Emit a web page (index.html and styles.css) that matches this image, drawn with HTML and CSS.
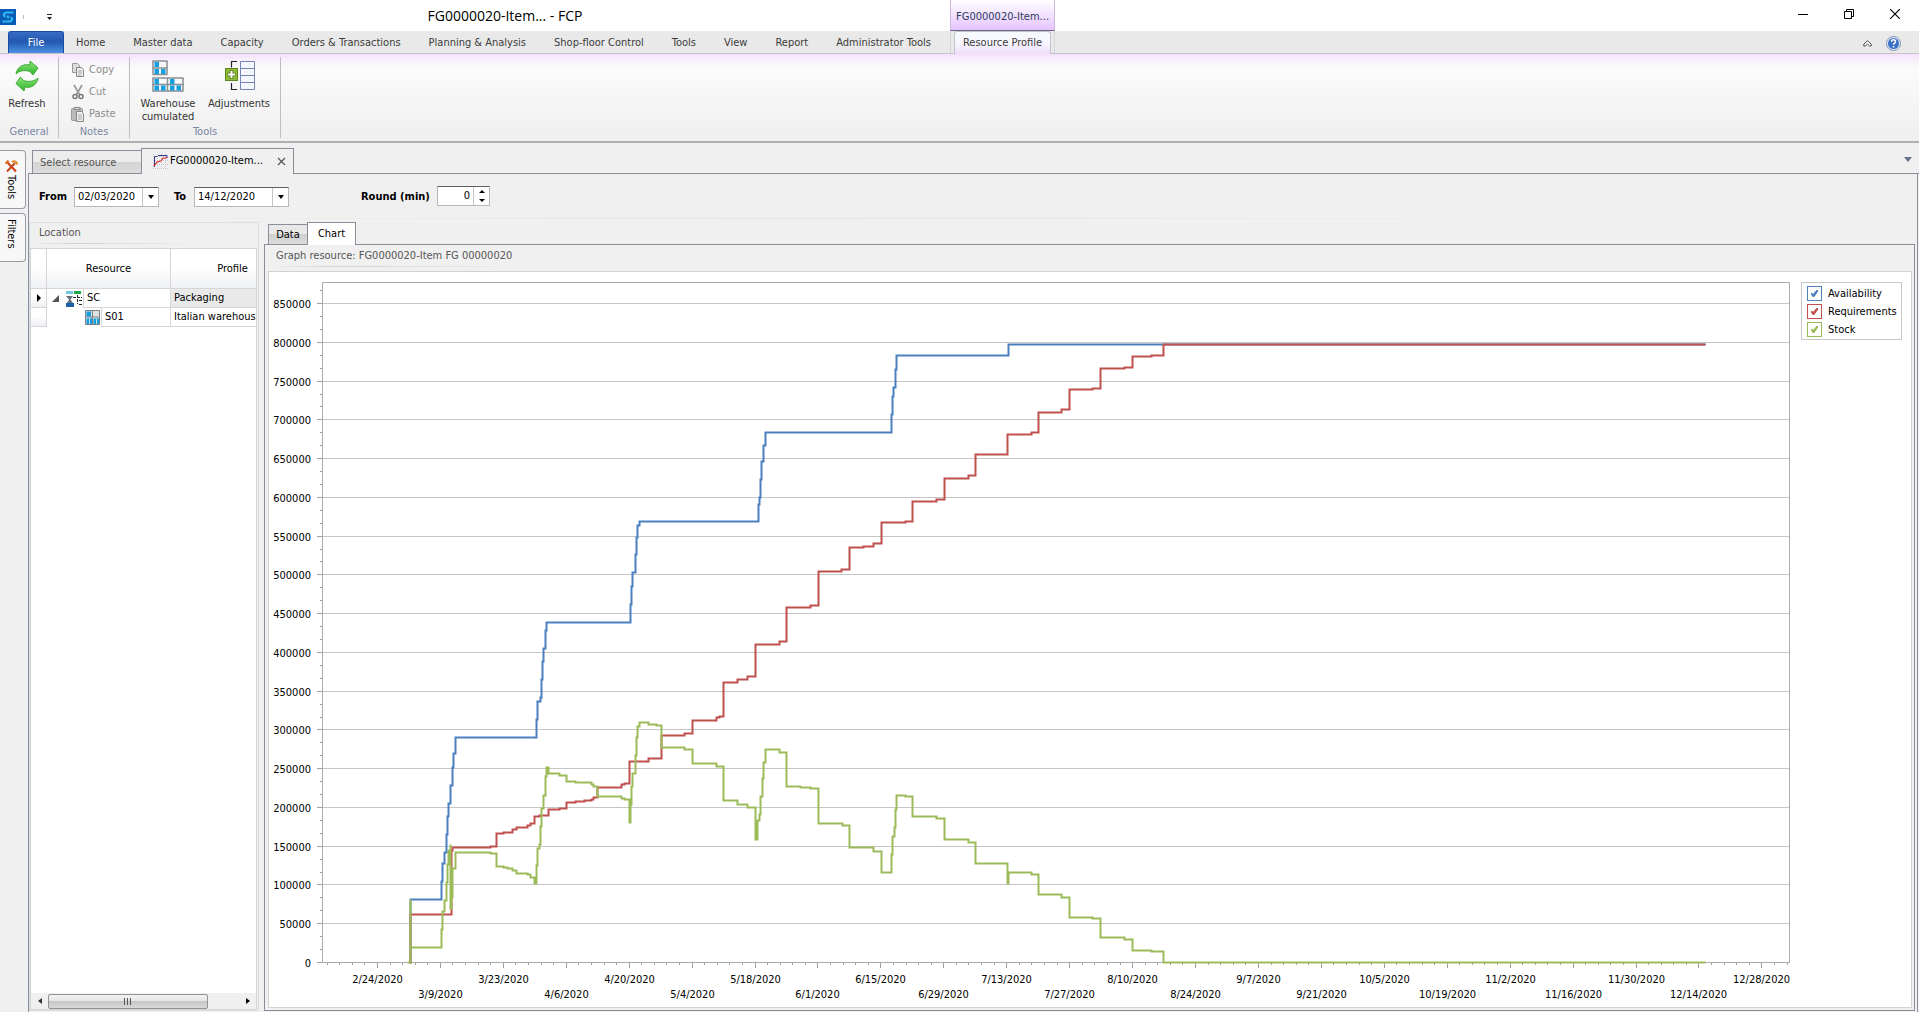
FILE: index.html
```html
<!DOCTYPE html>
<html lang="en">
<head>
<meta charset="utf-8">
<title>FG0000020-Item... - FCP</title>
<link rel="stylesheet" href="styles.css">
</head>
<body>
<header class="ribbon-head">
  <div class="titlebar">
    <div class="quick">
      <svg class="logo" width="16" height="16" viewBox="0 0 16 16" aria-hidden="true"><rect width="16" height="16" fill="#0a5bb5"/><path d="M13.500 3.500H7C3.500 3.500 3 7.500 5.500 7.500M2.500 12.500H9C12.500 12.500 13 8.500 10.500 8.500" fill="none" stroke="#31b8f2" stroke-width="2.200"/><circle cx="8" cy="8" r="1.400" fill="#31b8f2"/></svg>
      <span class="quick-sep"></span>
      <button class="quick-menu" aria-label="Customize quick access toolbar"><svg width="5" height="6" viewBox="0 0 5 6"><path d="M0 0h5v1H0zM0 3h5L2.500 6z" fill="#222"/></svg></button>
    </div>
    <h1 class="title">FG0000020-Item... - FCP</h1>
  </div>
  <div class="context-title">FG0000020-Item...</div>
  <div class="window-buttons">
    <button aria-label="Minimize"><svg width="10" height="10" viewBox="0 0 10 10"><path d="M0 5.500h10" stroke="#000"/></svg></button>
    <button aria-label="Restore"><svg width="10" height="10" viewBox="0 0 10 10"><path d="M.5 2.500h7v7h-7zM2.500 2.500v-2h7v7h-2" fill="none" stroke="#000"/></svg></button>
    <button aria-label="Close"><svg width="10" height="10" viewBox="0 0 10 10"><path d="M0 0l10 10M10 0L0 10" stroke="#000" stroke-width="1.200"/></svg></button>
  </div>
  <nav class="tabs">
    <button class="tab tab-file">File</button>
    <button class="tab">Home</button>
    <button class="tab">Master data</button>
    <button class="tab">Capacity</button>
    <button class="tab">Orders &amp; Transactions</button>
    <button class="tab">Planning &amp; Analysis</button>
    <button class="tab">Shop-floor Control</button>
    <button class="tab">Tools</button>
    <button class="tab">View</button>
    <button class="tab">Report</button>
    <button class="tab">Administrator Tools</button>
  </nav>
  <div class="context-tabs"><button class="tab tab-active">Resource Profile</button></div>
  <div class="ribbon-tools">
    <button aria-label="Collapse ribbon"><svg width="9" height="7" viewBox="0 0 9 7"><path d="M4.500 .7L.8 4.200v1.800h1.500L4.500 4l2.200 2h1.500V4.200z" fill="#fff" stroke="#444"/></svg></button>
    <button aria-label="Help"><svg width="15" height="15" viewBox="0 0 15 15"><circle cx="7.500" cy="7.500" r="7" fill="#e4ecf8" stroke="#7f93b5"/><circle cx="7.500" cy="7.500" r="5.500" fill="#3a70c4"/><path d="M5.500 5.800c0-2.600 4-2.600 4 0 0 1.500-2 1.300-2 3M7.500 10v1.600" fill="none" stroke="#fff" stroke-width="1.500"/></svg></button>
  </div>
</header>

<section class="ribbon" aria-label="Resource Profile">
  <div class="group group-general">
    <div class="group-body">
      <button class="big"><svg width="32" height="32" viewBox="0 0 32 32"><defs><linearGradient id="gr" x1="0" y1="0" x2="0" y2="1"><stop offset="0" stop-color="#8ee67a"/><stop offset="1" stop-color="#2fb32c"/></linearGradient></defs><path d="M5 14C6 7 12 3.500 19 5V1l8 7-5 7-3-3.500C13 9.500 8 11 5 14z" fill="url(#gr)" stroke="#3cab37"/><path d="M27 18c-1 7-7 10.500-13 9l-1 4-8-7.500L9.500 17l3 3.500C18 22.500 24 21 27 18z" fill="url(#gr)" stroke="#3cab37"/></svg><span>Refresh</span></button>
    </div>
    <div class="group-name">General</div>
  </div>
  <div class="group group-notes">
    <div class="group-body list">
      <button class="small" disabled><svg width="16" height="16" viewBox="0 0 16 16"><path d="M2.500 1.500h5l2 2v7h-7z" fill="#ddd" stroke="#999"/><path d="M6.500 5.500h5l2 2v7h-7z" fill="#ececec" stroke="#888"/><path d="M8 9h4M8 11h4M8 13h3" stroke="#aaa"/></svg>Copy</button>
      <button class="small" disabled><svg width="16" height="16" viewBox="0 0 16 16"><path d="M4 1l5.500 9.500M12 1L6.500 10.500" stroke="#999" stroke-width="1.700"/><circle cx="5" cy="12.500" r="2" fill="none" stroke="#777" stroke-width="1.500"/><circle cx="11" cy="12.500" r="2" fill="none" stroke="#777" stroke-width="1.500"/></svg>Cut</button>
      <button class="small" disabled><svg width="16" height="16" viewBox="0 0 16 16"><rect x="1.500" y="2.500" width="11" height="12" rx="1" fill="#bbb" stroke="#999"/><path d="M4 3.500V1.500h6v2z" fill="#ddd" stroke="#888"/><path d="M6.500 5.500h5l2 2v8h-7z" fill="#eee" stroke="#888"/><path d="M8 9h4M8 11h4M8 13h4" stroke="#aaa"/></svg>Paste</button>
    </div>
    <div class="group-name">Notes</div>
  </div>
  <div class="group group-tools">
    <div class="group-body">
      <button class="big wide"><svg width="32" height="32" viewBox="0 0 32 32"><path d="M.5 1h15M.5 8h15M.5 14.500h15M.5 18h31M.5 24.500h31M.5 31h31" stroke="#8a8f92" stroke-width="1.500"/><path d="M1 1v13M15 1v13M1 18v13M15.500 18v13M31 18v13" stroke="#8a8f92" stroke-width="1.500"/><path d="M2.500 2h4.500v5H2.500zM2.500 9h4.500v5H2.500zM9 9h4.500v5H9zM2.500 19h4.500v5H2.500zM18 19h4.500v5H18zM2.500 25.500h4.500v5H2.500zM9 25.500h4.500v5H9zM18 25.500h4.500v5H18zM24.500 25.500h4.500v5h-4.500z" fill="#14a0e0"/></svg><span>Warehouse<br>cumulated</span></button>
      <button class="big wide"><svg width="32" height="32" viewBox="0 0 32 32"><path d="M14 1.500H8.500v6M8.500 23v6.500H14" fill="none" stroke="#223" stroke-width="1.200"/><path d="M17.500 1.500h14v28h-14z" fill="#f6f7fc" stroke="#7684b8"/><path d="M17.500 8.500h14M17.500 15.500h14M17.500 22.500h14" stroke="#7684b8"/><rect x="2.500" y="8.500" width="12" height="12" fill="#8dbb36" stroke="#5b8620"/><path d="M8.500 10.500v8M4.500 14.500h8" stroke="#4a6a20" stroke-width="3.600"/><path d="M8.500 11v7M5 14.500h7" stroke="#fff" stroke-width="2"/></svg><span>Adjustments</span></button>
    </div>
    <div class="group-name">Tools</div>
  </div>
</section>

<main class="workspace">
  <aside class="side-tabs">
    <button class="side-tab"><svg width="13" height="13" viewBox="0 0 13 13"><path d="M2 2l9 9.500" stroke="#d0401c" stroke-width="2.200"/><path d="M10 3L2 11.500" stroke="#c8451a" stroke-width="2"/><path d="M7 2c2-2 5 0 5.500 2.500" fill="none" stroke="#e08c28" stroke-width="2"/><path d="M.5 3.500l3-3" stroke="#e0742c" stroke-width="2"/></svg>Tools</button>
    <button class="side-tab">Filters</button>
  </aside>
  <div class="document">
    <div class="doc-tabs">
      <button class="doc-tab doc-first">Select resource</button>
      <button class="doc-tab doc-active"><svg width="15" height="15" viewBox="0 0 15 15"><path d="M.5 0v15M4.500 0v15M8.500 0v15M12.500 0v15M0 2.500h15M0 6.500h15M0 10.500h15M0 14.500h15" stroke="#c4c4cc" stroke-dasharray="1 1"/><path d="M1.500 13V2.500h3M5 1.500h9V4" fill="none" stroke="#3a3a90"/><path d="M1 12l3-4 4-1 2-3 4 0" fill="none" stroke="#dc2020" stroke-width="1.200"/></svg><span>FG0000020-Item...</span><svg class="close" width="9" height="9" viewBox="0 0 9 9"><path d="M1 1l7 7M8 1L1 8" stroke="#555" stroke-width="1.200"/></svg></button>
      <button class="doc-menu" aria-label="Open documents"></button>
    </div>
    <div class="doc-body">
      <form class="filters">
        <label class="from" for="from">From</label>
        <span class="combo"><input id="from" value="02/03/2020"><button type="button" aria-label="Pick start date"><i class="down"></i></button></span>
        <label class="to" for="to">To</label>
        <span class="combo combo-to"><input id="to" value="14/12/2020"><button type="button" aria-label="Pick end date"><i class="down"></i></button></span>
        <label class="round" for="round">Round (min)</label>
        <span class="combo spin"><input id="round" value="0"><button type="button" aria-label="Change rounding"><i class="up"></i><i class="down"></i></button></span>
      </form>
      <div class="panes">
        <section class="location">
          <h2 class="caption">Location</h2>
          <div class="tree">
            <table>
              <thead><tr><th class="mark"></th><th class="res">Resource</th><th class="prof">Profile</th></tr></thead>
              <tbody>
                <tr>
                  <td class="mark"><i class="right"></i></td>
                  <td class="res"><span class="node"><i class="expand"></i><svg width="16" height="16" viewBox="0 0 16 16"><path d="M0 1.500h7" stroke="#6fc6dc" stroke-width="3"/><path d="M8 1.500h7" stroke="#1da84a" stroke-width="3"/><path d="M0 5h7l-2.500 3.500L7 12H1l2-3.500z" fill="#67727c"/><path d="M0 14h8" stroke="#1b62a8" stroke-width="4"/><path d="M7 6.500h9M11.500 4v9M13 9.500h3M13 13.500h3" stroke="#222" stroke-dasharray="3 1"/></svg><span class="cell">SC</span></span></td>
                  <td class="prof sel">Packaging</td>
                </tr>
                <tr>
                  <td class="mark"></td>
                  <td class="res"><span class="node child"><svg width="15" height="15" viewBox="0 0 15 15"><rect width="15" height="15" fill="#dfe3e6"/><path d="M.5 .5h14v14H.5zM0 7h15M7.500 0v15" fill="none" stroke="#7b8186"/><path d="M1.500 1.500h4.500v5H1.500zM1.500 8.500h5.500V14H1.500zM8.500 8.500h5.500V14H8.500z" fill="#149cdf"/><path d="M4.500 9v5M11.500 9v5" stroke="#bfe2f3"/></svg><span class="cell">S01</span></span></td>
                  <td class="prof">Italian warehouse</td>
                </tr>
              </tbody>
            </table>
            <div class="hscroll">
              <button aria-label="Scroll left"><i class="left"></i></button>
              <div class="track"><div class="thumb"></div></div>
              <button aria-label="Scroll right"><i class="right"></i></button>
            </div>
          </div>
        </section>
        <section class="graph">
          <div class="view-tabs">
            <button class="view-tab">Data</button>
            <button class="view-tab view-active">Chart</button>
          </div>
          <div class="graph-body">
            <h2 class="caption">Graph resource: FG0000020-Item FG 00000020</h2>
            <div class="chart">
              <div class="plot"><svg id="plot" role="img" aria-label="Availability, requirements and stock over time"></svg></div>
              <div class="legend">
                <label class="blue"><input type="checkbox" checked>Availability</label>
                <label class="red"><input type="checkbox" checked>Requirements</label>
                <label class="green"><input type="checkbox" checked>Stock</label>
              </div>
            </div>
          </div>
        </section>
      </div>
    </div>
  </div>
</main>
<script src="chart.js"></script>
</body>
</html>
```
FILE: styles.css
```css
* { box-sizing: border-box; }
body {
  margin: 0;
  min-height: 100vh;
  display: flex;
  flex-direction: column;
  background: #f0f0f0;
  color: #000;
  font: 11px/14px "DejaVu Sans Condensed", Roboto, sans-serif;
}
button, input { font: inherit; color: inherit; }
button { margin: 0; padding: 0; border: 0; background: none; }
h1, h2 { margin: 0; font-weight: normal; }
svg { display: block; flex: none; }

/* Title bar and ribbon tabs */
.ribbon-head {
  display: grid;
  grid-template-columns: auto auto 1fr;
  grid-template-rows: 31px 22px;
  background: linear-gradient(#fff 31px, #e9e9e9 31px);
  border-bottom: 1px solid #c6c2cc;
  height: 54px;
}
.titlebar { display: flex; align-items: center; }
.quick { display: flex; align-items: center; width: 60px; padding-top: 3px; }
.quick-sep { width: 1px; height: 4px; margin-left: 7px; background: #bbb; }
.quick-menu { margin-left: 23px; }
.title { flex: 1; text-align: center; font: 14px/18px "Open Sans", sans-serif; padding-top: 1px; }
.context-title {
  padding-top: 10px;
  text-align: center;
  color: #2c3a5c;
  border: solid #cdb8dc;
  border-width: 0 1px 1px;
  border-bottom-color: #6a6480;
  background: linear-gradient(#fff, #e6c4ff);
}
.window-buttons { display: flex; justify-content: flex-end; gap: 36px; padding: 9px 19px 0 0; align-items: flex-start; }
.tabs { display: flex; padding: 0 5px 0 8px; }
.tab { padding: 1px 14px 0; color: #3b3b3b; white-space: nowrap; }
.tab-file {
  width: 56px;
  margin-right: -2px;
  color: #fff;
  border: 1px solid #1c4aa0;
  border-bottom: 0;
  border-radius: 3px 3px 0 0;
  background: linear-gradient(#3a6cc4, #2358b0 45%, #4a90e0);
}
.context-tabs { display: flex; padding: 0 3px; border: solid #d4d4d4; border-width: 0 1px; }
.tab-active {
  padding: 0 8px;
  margin-bottom: -1px;
  border: 1px solid #c2c2ca;
  border-bottom: 0;
  border-radius: 3px 3px 0 0;
  background: linear-gradient(#f6faff, #f8f6ff 50%, #f0dcfc);
}
.ribbon-tools { display: flex; justify-content: flex-end; align-items: center; gap: 14px; padding: 2px 18px 0 0; }

/* Ribbon */
.ribbon {
  display: flex;
  height: 89px;
  padding-top: 3px;
  background: linear-gradient(#f4e0fb, #f8f0fc 6px, #fbfbfb 15px, #f0f0f0 80px);
  border-bottom: 2px solid #b0b0b0;
}
.group { display: flex; flex-direction: column; margin-bottom: 3px; border-right: 1px solid #bdbdc2; }
.group-general { width: 59px; }
.group-notes { width: 71px; }
.group-tools { width: 151px; }
.group-body { display: flex; flex: 1; padding-top: 3px; }
.group-name { color: #7a86a4; text-align: center; line-height: 12px; }
.big { display: flex; flex-direction: column; align-items: center; width: 54px; color: #333; line-height: 13px; gap: 5px; }
.wide { width: 76px; }
.wide + .wide { width: 66px; }
.list { flex-direction: column; gap: 6px; padding: 5px 0 0 11px; }
.small { display: flex; align-items: center; gap: 3px; height: 16px; color: #8c8c8c; }

/* Document area */
.workspace { flex: 1; display: flex; min-height: 0; }
.side-tabs { flex: none; width: 28px; padding-top: 7px; display: flex; flex-direction: column; gap: 4px; }
.side-tab {
  width: 26px;
  height: 59px;
  display: flex;
  align-items: center;
  padding: 9px 3px 0 0;
  gap: 2px;
  writing-mode: vertical-rl;
  border: 1px solid #9a9aa2;
  border-left: 0;
  border-radius: 0 4px 4px 0;
  background: #f7f7f7;
}
.side-tab + .side-tab { height: 49px; padding-top: 5px; }
.document { flex: 1; min-width: 0; display: flex; flex-direction: column; }
.doc-tabs { display: flex; align-items: flex-end; height: 31px; padding: 0 7px 0 4px; border-bottom: 1px solid #8a8e9a; }
.doc-tab { display: flex; align-items: center; border: 1px solid #8a8e9a; border-bottom: 0; white-space: nowrap; }
.doc-first { width: 109px; height: 23px; padding: 1px 0 0 7px; color: #555; border-right: 0; background: linear-gradient(#ececec 50%, #d4d4d4 50%, #dcdcdc); }
.doc-active { width: 153px; height: 26px; margin-bottom: -1px; padding: 0 7px 1px 11px; gap: 2px; background: #f0f0f0; }
.close { margin-left: auto; }
.doc-menu { margin: 0 0 11px auto; border: solid transparent; border-width: 5px 4px 0; border-top-color: #66758f; }
.doc-body { flex: 1; display: flex; flex-direction: column; margin-right: 1px; border: solid #8a8e9a; border-width: 0 1px; }
.filters { display: flex; height: 44px; padding: 11px 0 0 10px; align-items: flex-start; }
.filters label { font-weight: bold; line-height: 24px; }
.from { width: 35px; }
.to { width: 20px; margin-left: 15px; }
.round { width: 76px; margin-left: 72px; }
.combo { display: flex; width: 85px; height: 20px; margin-top: 2px; border: 1px solid #b8b8b8; border-top-color: #606060; background: #fff; }
.combo-to { width: 95px; }
.combo input { flex: 1; min-width: 0; border: 0; padding: 0 3px; background: none; }
.combo button { width: 16px; display: flex; flex-direction: column; align-items: center; justify-content: center; gap: 6px; border-left: 1px solid #c4c4c4; }
.combo.spin { width: 53px; margin-top: 1px; }
.spin input { text-align: right; }
.down { border: solid transparent; border-width: 4px 3px 0; border-top-color: #000; }
.spin .down { border-width: 3px 3px 0; }
.up { border: solid transparent; border-width: 0 3px 3px; border-bottom-color: #000; }
.right { display: inline-block; border: solid transparent; border-width: 4px 0 4px 4px; border-left-color: #000; }
.left { border: solid transparent; border-width: 4px 4px 4px 0; border-right-color: #333; }
.hscroll .left, .hscroll .right { border-top-width: 3px; border-bottom-width: 3px; }

.panes { flex: 1; display: flex; gap: 5px; padding: 4px 1px 1px 0; background: linear-gradient(90deg, #f0f0f0, #e4e4e4 40%, #f0f0f0 90%) no-repeat 0 0 / 100% 1px; }
.caption { display: inline-block; font-size: 11px; line-height: 14px; color: #555; }
.location { width: 230px; flex: none; display: flex; flex-direction: column; border: 1px solid #d4dfe8; padding-right: 1px; }
.location .caption { padding: 3px 0 4px 9px; }
.tree { flex: 1; display: flex; flex-direction: column; margin-top: 4px; border: 1px solid #d6d6d6; background: #fff; overflow: hidden; }
.location .caption, .graph .caption { background: linear-gradient(90deg, #f0f0f0, #d2d2d2 20%, #f0f0f0 75%) no-repeat 0 100% / 100% 1px; }
.tree table { table-layout: fixed; width: 264px; border-collapse: separate; border-spacing: 0; }
.tree th { height: 40px; font-weight: normal; background: linear-gradient(#fff, #fff 50%, #eef0f4); border: solid #d6d6d6; border-width: 0 1px 1px 0; padding: 0; }
.tree td { height: 19px; padding: 0; border: solid #d6d6d6; border-width: 0 1px 1px 0; }
.tree .mark { width: 16px; text-align: center; line-height: 8px; }
.tree td.mark { background: linear-gradient(#fff 40%, #eef0f4); }
.tree .res { width: 124px; }
.tree td.res { border-bottom: 0; }
.tree td.prof { padding-left: 3px; }
.tree td.sel { background: #e9e9e9; }
.node { display: flex; align-items: center; height: 19px; padding-left: 5px; gap: 1px; }
.node.child { padding-left: 38px; }
.cell { flex: 1; padding-left: 3px; line-height: 18px; border: solid #d6d6d6; border-width: 0 0 1px 1px; }
.expand { width: 7px; height: 7px; margin-right: 6px; background: #555; clip-path: polygon(100% 0, 100% 100%, 0 100%); }
.hscroll { display: flex; align-items: center; height: 16px; margin-top: auto; background: #f0f0f0; }
.hscroll button { width: 17px; display: flex; justify-content: center; }
.track { flex: 1; }
.thumb {
  width: 84%;
  height: 15px;
  border: 1px solid #929292;
  border-radius: 2px;
  background: linear-gradient(90deg, #555 1px, transparent 1px 3px, #555 3px 4px, transparent 4px 6px, #555 6px 7px, transparent 7px) no-repeat 50% 50% / 8px 7px, linear-gradient(#f2f2f2, #e4e4e4 50%, #c6c6ca 50%, #d8d8d8);
}

.graph { flex: 1; min-width: 0; display: flex; flex-direction: column; margin-right: 1px; }
.view-tabs { display: flex; align-items: flex-end; height: 22px; padding-left: 4px; }
.view-tab { width: 39px; height: 20px; border: 1px solid #8a8e9a; border-bottom: 0; border-right: 0; background: linear-gradient(#e8e8e8 50%, #d0d0d0 50%, #dcdcdc); }
.view-active { width: 49px; height: 23px; margin-bottom: -1px; background: #fff; border-right: 1px solid #8a8e9a; position: relative; }
.graph-body { flex: 1; display: flex; flex-direction: column; align-items: stretch; border: 1px solid #8a8e9a; padding: 0 2px 2px 3px; }
.graph .caption { align-self: flex-start; padding: 4px 90px 4px 8px; }
.chart { flex: 1; display: flex; align-items: flex-start; gap: 11px; margin-top: 4px; padding: 10px 9px 44px 53px; border: 1px solid #d2d2d2; background: #fff; }
.plot { flex: 1; min-width: 0; align-self: stretch; display: flex; }
#plot { flex: 1; min-width: 0; overflow: visible; font-size: 11px; }
.legend { flex: none; width: 101px; height: 58px; border: 1px solid #c8c8c8; padding: 3px 0 0 5px; display: flex; flex-direction: column; gap: 3px; }
.legend label { display: flex; align-items: center; gap: 6px; height: 15px; }
.legend input { appearance: none; flex: none; margin: 0; width: 15px; height: 15px; padding: 3px; border: 1px solid currentColor; }
.legend input::before { content: ""; display: block; width: 7px; height: 7px; background: currentColor; clip-path: polygon(0 35%, 30% 55%, 80% 0, 100% 0, 100% 25%, 45% 100%, 25% 100%, 0 65%); }
.blue input { color: #4f81bd; }
.red input { color: #c0504d; }
.green input { color: #9bbb59; }
```
FILE: chart.js
```js
// Step series: each pair is the x where the level changes and the new level,
// on a grid whose plotting area spans X and Y below.
const X = [322, 1790];
const Y = [282, 963];
const SERIES = [
  { color: '#4a80c0', steps: [410,963, 410,900, 441,882, 442,864, 444,853, 446,835, 447,817, 448,804, 450,786, 452,768, 453,754, 455,738, 536,720, 537,702, 540,698, 541,680, 542,662, 543,649, 545,631, 546,622, 630,604, 631,586, 632,572, 635,554, 636,537, 637,525, 639,521, 758,504, 759,497, 760,479, 761,461, 763,445, 765,432, 891,414, 892,396, 893,387, 895,369, 896,355, 1008,344, 1705,344] },
  { color: '#c0504d', steps: [410,963, 410,915, 451,851, 452,848, 490,847, 496,834, 503,833, 512,830, 516,828, 527,826, 530,824, 534,817, 539,816, 548,810, 559,809, 566,803, 575,802, 584,801, 591,800, 593,798, 597,788, 621,785, 624,784, 629,762, 648,759, 661,736, 684,734, 692,721, 716,718, 719,717, 723,683, 737,680, 747,677, 755,645, 779,642, 786,607, 810,605, 818,571, 841,569, 849,547, 863,546, 873,543, 881,522, 905,521, 912,501, 936,499, 944,478, 968,475, 975,454, 1007,434, 1031,432, 1038,412, 1062,409, 1070,389, 1093,388, 1101,368, 1125,367, 1133,356, 1152,355, 1164,344, 1705,344] },
  { color: '#9bbb59', steps: [408,963, 410,900, 410,948, 441,930, 442,912, 444,901, 446,883, 447,865, 448,851, 450,845, 450,909, 451,898, 452,869, 455,853, 490,854, 496,867, 503,868, 507,869, 512,871, 516,874, 527,875, 530,878, 534,884, 536,866, 537,849, 539,845, 540,827, 541,809, 543,796, 545,777, 546,768, 548,774, 559,776, 566,782, 575,783, 591,785, 593,787, 597,797, 621,799, 624,800, 629,823, 630,805, 631,787, 632,774, 635,756, 636,738, 637,727, 639,723, 648,725, 656,726, 661,748, 684,750, 692,764, 716,767, 723,801, 737,805, 747,808, 755,840, 757,821, 759,815, 760,797, 762,779, 763,763, 765,750, 779,753, 786,787, 800,788, 810,789, 818,824, 842,826, 849,848, 873,852, 881,873, 891,855, 892,837, 894,828, 895,810, 896,796, 905,797, 912,817, 936,819, 944,840, 968,843, 975,864, 1007,884, 1008,873, 1031,875, 1038,895, 1062,898, 1070,918, 1093,919, 1101,938, 1125,940, 1133,951, 1152,952, 1164,963, 1705,963] }
];
const MAX = 877200;          // value at the top edge
const FIRST = 377;           // grid x of the first date label
const WEEKS2 = 62.97;        // grid distance of fourteen days
const START = Date.UTC(2020, 1, 24);

const svg = document.getElementById('plot');

function add(name, attrs, text) {
  const el = document.createElementNS('http://www.w3.org/2000/svg', name);
  for (const key in attrs) el.setAttribute(key, attrs[key]);
  if (text !== undefined) el.textContent = text;
  svg.appendChild(el);
}

function draw() {
  const w = svg.clientWidth, h = svg.clientHeight;
  const px = x => Math.round((x - X[0]) / (X[1] - X[0]) * (w - 1)) + 0.5;
  const py = y => Math.round((y - Y[0]) / (Y[1] - Y[0]) * (h - 1)) + 0.5;
  svg.textContent = '';

  let grid = '', ticks = '';
  for (let i = 0; i * 50000 / 3 < MAX; i++) {
    const y = Math.round((1 - i * 50000 / 3 / MAX) * (h - 1)) + 0.5;
    if (i % 3) { ticks += `M-2 ${y}h3`; continue; }
    grid += `M0 ${y}H${w}`;
    ticks += `M-5 ${y}h6`;
    add('text', { x: -11, y: y + 4, 'text-anchor': 'end' }, i / 3 * 50000);
  }
  for (let i = -4; i <= 112; i++) {
    const x = px(FIRST + i * WEEKS2 / 5);
    ticks += `M${x} ${h}v${i % 5 ? 2 : 5}`;
    if (i % 5) continue;
    const d = new Date(START + i / 5 * 14 * 864e5);
    const label = `${d.getUTCMonth() + 1}/${d.getUTCDate()}/${d.getUTCFullYear()}`;
    add('text', { x: x, y: h + (i % 10 ? 35 : 20), 'text-anchor': 'middle' }, label);
  }
  add('path', { d: grid, stroke: '#c6c6c6' });
  add('path', { d: ticks, stroke: '#a0a0a0' });
  add('rect', { x: 0.5, y: 0.5, width: w - 1, height: h - 1, fill: 'none', stroke: '#acacac' });

  for (const s of SERIES) {
    let d = `M${px(s.steps[0])} ${py(s.steps[1])}`;
    for (let i = 2; i < s.steps.length; i += 2) d += `H${px(s.steps[i])}V${py(s.steps[i + 1])}`;
    add('path', { d: d, fill: 'none', stroke: s.color, 'stroke-width': 2, 'stroke-linecap': 'square' });
  }
}

new ResizeObserver(draw).observe(svg);
draw();
```
